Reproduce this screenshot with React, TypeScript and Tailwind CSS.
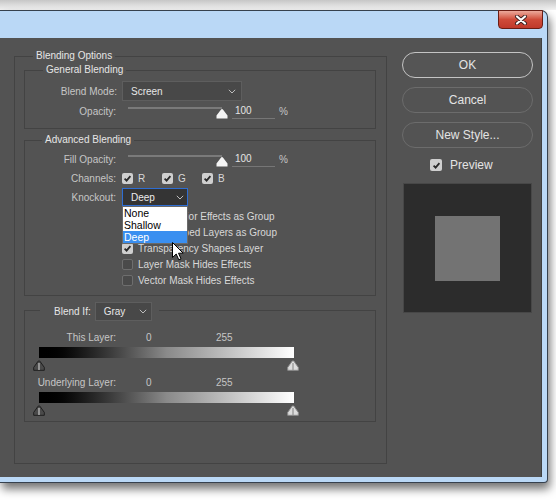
import type { ReactNode } from 'react'

function Chevron() {
  return (
    <svg width="8" height="5" viewBox="0 0 8 5" className="shrink-0">
      <path d="M0.8 0.8 L4 4 L7.2 0.8" fill="none" stroke="#bdbdbd" strokeWidth="1" />
    </svg>
  )
}

function Thumb({ className }: { className: string }) {
  return (
    <svg width="12" height="11" viewBox="0 0 12 11" className={className}>
      <path d="M6 1 Q6.6 1 7.1 1.7 L11.5 7.6 V10.5 H0.5 V7.6 L4.9 1.7 Q5.4 1 6 1 Z" fill="#f4f4f4" />
    </svg>
  )
}

function RangeThumb({ dark, className }: { dark?: boolean; className: string }) {
  return (
    <svg width="12" height="11" viewBox="0 0 12 11" className={className}>
      <path
        d="M6 0.8 Q6.6 0.8 7.1 1.5 L11.3 7.4 V10.3 H0.7 V7.4 L4.9 1.5 Q5.4 0.8 6 0.8 Z"
        fill={dark ? '#4a4a4a' : '#dcdcdc'}
        stroke={dark ? '#1e1e1e' : '#8c8c8c'}
        strokeWidth="1"
      />
      <path d="M6 3 V10" stroke={dark ? '#b4b4b4' : '#9a9a9a'} strokeWidth="1.4" />
    </svg>
  )
}

function Check({ on, size = 'w-[11px] h-[11px]' }: { on?: boolean; size?: string }) {
  if (!on) return <div className={`${size} shrink-0 rounded-[2px] border border-[#6e6e6e] bg-[#4a4a4a]`} />
  return (
    <div className={`${size} flex shrink-0 items-center justify-center rounded-[2px] bg-[#cfcfcf]`}>
      <svg width="9" height="9" viewBox="0 0 9 9">
        <path d="M1.6 4.6 L3.6 6.6 L7.4 2.2" fill="none" stroke="#2a2a2a" strokeWidth="1.8" />
      </svg>
    </div>
  )
}

function Group({ title, className, labelClass, children }: { title: ReactNode; className: string; labelClass: string; children?: ReactNode }) {
  return (
    <div className={`border border-[#434343] ${className}`}>
      <div className={`w-fit bg-[#535353] text-[#e6e6e6] ${labelClass}`}>{title}</div>
      {children}
    </div>
  )
}

function SliderRow({ label }: { label: string }) {
  return (
    <div className="flex h-[20px] items-center">
      <div className="w-[91px] text-right">{label}</div>
      <div className="relative ml-[12px] h-[20px] w-[100px]">
        <div className="absolute left-0 top-[6px] h-[2px] w-[94px] bg-[#7a7a7a]" />
        <Thumb className="absolute left-[88px] top-[7px]" />
      </div>
      <div className="ml-[4px] h-[16px] w-[43px] border-b border-[#767676] pl-[3px] leading-[15px] text-[#e4e4e4]">100</div>
      <div className="ml-[4px]">%</div>
    </div>
  )
}

function CheckRow({ on, label }: { on?: boolean; label: string }) {
  return (
    <div className="flex h-[16px] items-center pl-[97px]">
      <Check on={on} />
      <span className="ml-[5px] text-[#d8d8d8]">{label}</span>
    </div>
  )
}

function RangeBlock({ label, first }: { label: string; first?: boolean }) {
  return (
    <>
      <div className={`flex h-[14px] items-center ${first ? 'mt-[9px]' : 'mt-[4px]'}`}>
        <div className="w-[91px] text-right">{label}</div>
        <div className="w-[100px] pl-[30px]">0</div>
        <div>255</div>
      </div>
      <div className="ml-[14px] mt-[3px] h-[11px] w-[255px] bg-linear-to-r from-black via-[#8a8a8a] to-white" />
      <div className="relative ml-[8px] mt-[2px] h-[11px] w-[270px]">
        <RangeThumb dark className="absolute left-0 top-0" />
        <RangeThumb className="absolute left-[254px] top-0" />
      </div>
    </>
  )
}

export default function App() {
  return (
    <div className="h-[500px] w-[556px] overflow-hidden bg-white font-['Liberation_Sans',Arial,sans-serif] text-[10px] text-[#c6c6c6]">
      <div className="h-[10px] bg-linear-to-b from-[#c6c6c6] to-[#f4f4f4]" />

      <div className="flex h-[473px] w-[548px] flex-col rounded-tr-[7px] rounded-br-[4px] border border-l-0 border-[#36414e] bg-[#bad8f6] shadow-[2px_6px_10px_rgba(0,0,0,0.55)]">
        {/* title bar */}
        <div className="flex h-[27px] shrink-0 items-start justify-end pr-[4px]">
          <div className="-mt-px flex h-[19px] w-[45px] items-center justify-center rounded-b-[4px] border border-[#6b1d14] bg-linear-to-b from-[#eba99c] via-[#cf4b39] to-[#c0392b]">
            <svg width="14" height="10" viewBox="0 0 14 10">
              <path d="M3 1.5 L11 8.5 M11 1.5 L3 8.5" stroke="#3a2020" strokeWidth="4" strokeLinecap="round" />
              <path d="M3 1.5 L11 8.5 M11 1.5 L3 8.5" stroke="#ffffff" strokeWidth="2.2" strokeLinecap="round" />
            </svg>
          </div>
        </div>

        {/* client area */}
        <div className="mr-[5px] flex h-[439px] items-start border-r border-[#3f3f3f] bg-[#535353]">
          {/* left panel */}
          <Group title="Blending Options" className="ml-[14px] mt-[18px] h-[408px] w-[373px] shrink-0" labelClass="-mt-[8px] ml-[18px] px-[3px] leading-[14px]">
            <Group title="General Blending" className="ml-[9px] mt-[7px] h-[59px] w-[352px]" labelClass="-mt-[8px] ml-[18px] px-[3px] leading-[14px]">
              <div className="mt-[4px] flex h-[20px] items-center">
                <div className="w-[92px] text-right">Blend Mode:</div>
                <div className="ml-[5px] flex h-[20px] w-[120px] items-center justify-between border border-[#5e5e5e] bg-[#484848] pl-[8px] pr-[5px] text-[#e6e6e6]">
                  <span>Screen</span>
                  <Chevron />
                </div>
              </div>
              <SliderRow label="Opacity:" />
            </Group>

            <Group title="Advanced Blending" className="ml-[9px] mt-[11px] h-[156px] w-[352px]" labelClass="-mt-[8px] ml-[17px] px-[3px] leading-[14px]">
              <div className="mt-[2px]">
                <SliderRow label="Fill Opacity:" />
              </div>
              <div className="flex h-[18px] items-center">
                <div className="w-[91px] text-right">Channels:</div>
                <div className="ml-[6px] flex">
                  {['R', 'G', 'B'].map((c) => (
                    <div key={c} className="flex w-[40px] items-center">
                      <Check on />
                      <span className="ml-[5px] text-[#d8d8d8]">{c}</span>
                    </div>
                  ))}
                </div>
              </div>
              <div className="flex h-[20px] items-center">
                <div className="w-[91px] text-right">Knockout:</div>
                <div className="relative ml-[6px]">
                  <div className="flex h-[18px] w-[66px] items-center justify-between border border-[#2e6dd2] bg-[#343434] pl-[8px] pr-[3px] text-[#ececec]">
                    <span>Deep</span>
                    <Chevron />
                  </div>
                  <div className="absolute left-0 top-full z-10 w-[66px] border border-[#6a6a6a] bg-white font-['Liberation_Sans',Arial,sans-serif] text-[10.5px] leading-[12px] text-black">
                    <div className="pl-[1px]">None</div>
                    <div className="pl-[1px]">Shallow</div>
                    <div className="bg-[#3a8ff0] pl-[1px] text-white">Deep</div>
                  </div>
                  <svg width="12" height="19" viewBox="0 0 12 19" className="absolute left-[50px] top-[54px] z-20">
                    <path d="M0.5 0.5 V15.5 L4.2 12 L6.8 17.8 L9 16.8 L6.5 11.2 H11.2 Z" fill="#ffffff" stroke="#000000" strokeWidth="1" strokeLinejoin="round" />
                  </svg>
                </div>
              </div>
              <div className="mt-[1px]">
                <CheckRow label="Blend Interior Effects as Group" />
                <CheckRow on label="Blend Clipped Layers as Group" />
                <CheckRow on label="Transparency Shapes Layer" />
                <CheckRow label="Layer Mask Hides Effects" />
                <CheckRow label="Vector Mask Hides Effects" />
              </div>
            </Group>

            <Group
              title={
                <div className="flex h-[20px] items-center">
                  <span className="text-[#e6e6e6]">Blend If:</span>
                  <div className="ml-[4px] flex h-[19px] w-[57px] items-center justify-between border border-[#5e5e5e] bg-[#484848] pl-[8px] pr-[4px] text-[#e6e6e6]">
                    <span>Gray</span>
                    <Chevron />
                  </div>
                </div>
              }
              className="ml-[9px] mt-[14px] h-[112px] w-[352px]"
              labelClass="-mt-[10px] ml-[15px] pl-[14px] pr-[7px]"
            >
              <RangeBlock first label="This Layer:" />
              <RangeBlock label="Underlying Layer:" />
            </Group>
          </Group>

          {/* right column */}
          <div className="ml-[15px] mt-[14px] w-[131px] shrink-0 text-[12px] text-[#e4e4e4]">
            <div className="flex flex-col gap-[9px]">
              <button className="h-[26px] rounded-full border border-[#c4c4c4] bg-[#555555]">OK</button>
              <button className="h-[26px] rounded-full border border-[#6c6c6c] bg-[#535353]">Cancel</button>
              <button className="h-[26px] rounded-full border border-[#6c6c6c] bg-[#535353]">New Style...</button>
            </div>
            <div className="mt-[8px] flex h-[18px] items-center pl-[28px]">
              <Check on size="w-[12px] h-[12px]" />
              <span className="ml-[8px]">Preview</span>
            </div>
            <div className="ml-[1px] mt-[9px] flex h-[130px] w-[129px] items-center justify-center border border-[#474747] bg-[#2c2c2c]">
              <div className="h-[65px] w-[65px] bg-[#737373]" />
            </div>
          </div>
        </div>
      </div>
    </div>
  )
}
